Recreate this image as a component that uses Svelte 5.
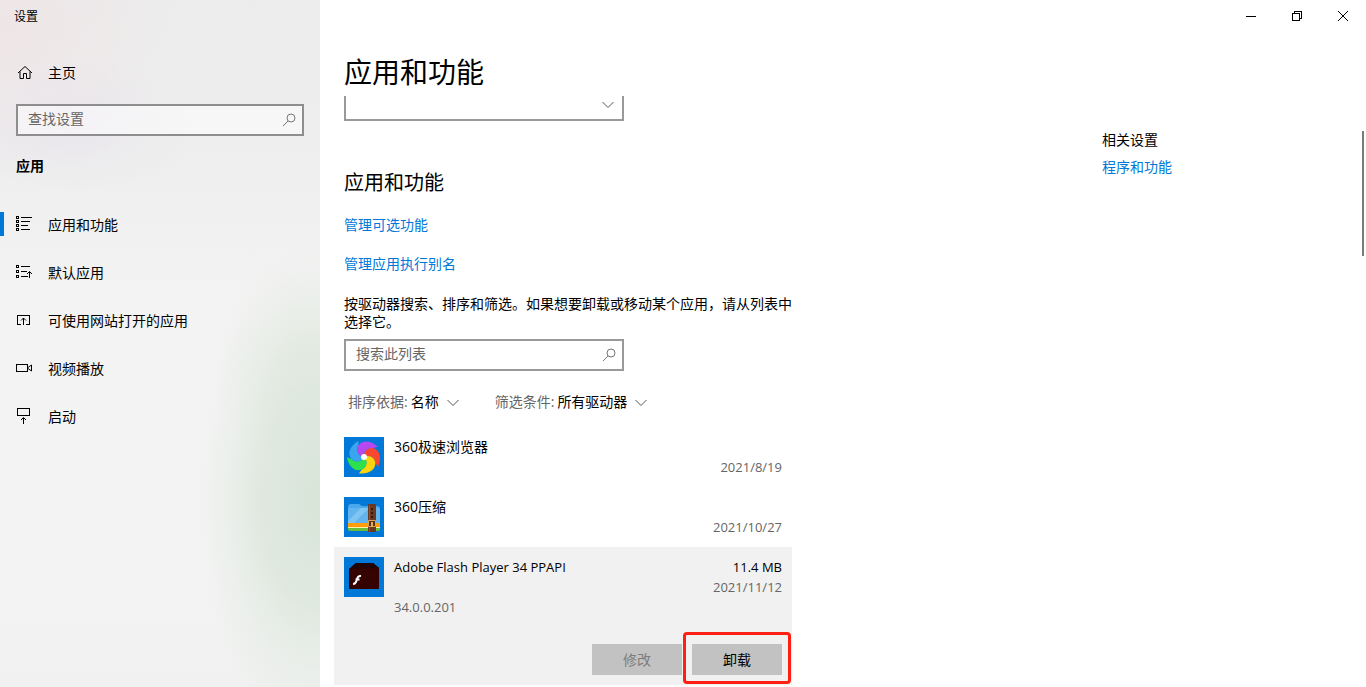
<script>
  let active = "apps";
  let settingQuery = "";
  let appQuery = "";

  const navItems = [
    { id: "apps", label: "应用和功能" },
    { id: "defaults", label: "默认应用" },
    { id: "websites", label: "可使用网站打开的应用" },
    { id: "video", label: "视频播放" },
    { id: "startup", label: "启动" },
  ];

  const apps = [
    { icon: "browser", name: "360极速浏览器", date: "2021/8/19" },
    { icon: "zip", name: "360压缩", date: "2021/10/27" },
    {
      icon: "flash",
      name: "Adobe Flash Player 34 PPAPI",
      latin: true,
      size: "11.4 MB",
      date: "2021/11/12",
      version: "34.0.0.201",
      selected: true,
    },
  ];

  const petals = [
    { color: "#fb4630", turn: 0 },
    { color: "#fbd40d", turn: 72 },
    { color: "#2ee04e", turn: 144 },
    { color: "#3aa5ef", turn: 216 },
    { color: "#b548ee", turn: 288 },
  ];
</script>

{#snippet magnifier()}
  <svg class="magnifier" viewBox="0 0 14 14" aria-hidden="true">
    <circle cx="9" cy="5" r="4" />
    <path d="M6 8L1 13" />
  </svg>
{/snippet}

{#snippet chevron()}
  <svg class="chevron" viewBox="0 0 12 8" aria-hidden="true">
    <path d="M0.5 1L6 6.5L11.5 1" />
  </svg>
{/snippet}

<div class="window">
  <div class="sidebar">
    <div class="caption">设置</div>
    <a class="nav-item home" href="#home">
      <svg class="smooth" viewBox="0 0 16 16" aria-hidden="true">
        <path d="M2 9L9 2.5L16 9M4 7.5V14.5H7.5V9.5H10.5V14.5H14V7.5" />
      </svg>
      <span>主页</span>
    </a>
    <div class="search side-search">
      <input
        type="text"
        placeholder="查找设置"
        aria-label="查找设置"
        bind:value={settingQuery}
      />
      {@render magnifier()}
    </div>
    <h3>应用</h3>
    <nav>
      {#each navItems as item}
        <a
          class="nav-item"
          class:active={active === item.id}
          href="#{item.id}"
          on:click={() => (active = item.id)}
        >
          <svg viewBox="0 0 16 16" aria-hidden="true">
            {#if item.id === "apps"}
              <path
                d="M.5 .5h2v2h-2zM.5 4.5h2v2h-2zM.5 8.5h2v2h-2zM.5 12.5h2v2h-2zM5 1.5h11M5 5.5h9M5 9.5h7M5 13.5h9"
              />
            {:else if item.id === "defaults"}
              <path
                d="M.5 1.5h2v2h-2zM.5 6.5h2v2h-2zM.5 11.5h2v2h-2zM5 2.5h9M5 7.5h6M5 12.5h7M13.5 8v6"
              />
              <path class="smooth" d="M11 10L13.5 7.5L16 10" />
            {:else if item.id === "websites"}
              <path d="M5 12.5H1.5V3.5H13.5V12.5H10M7.5 6v7" />
              <path class="smooth" d="M5 8.5L7.5 6L10 8.5" />
            {:else if item.id === "video"}
              <path d="M.5 4.5h11v7h-11z" />
              <path class="smooth" d="M12 7.5L15.5 5v6L12 8.5" />
            {:else}
              <path d="M1.5 .5h12v7h-12zM7.5 10v6" />
              <path class="smooth" d="M5 12L7.5 9.5L10 12" />
            {/if}
          </svg>
          <span>{item.label}</span>
        </a>
      {/each}
    </nav>
  </div>

  <main>
    <div class="window-buttons">
      <button aria-label="最小化">
        <svg viewBox="0 0 10 10"><path d="M0 5.5h10" /></svg>
      </button>
      <button aria-label="还原">
        <svg viewBox="0 0 10 10">
          <path d="M.5 2.5h7v7h-7zM2.5 2.5v-2h7v7h-2" />
        </svg>
      </button>
      <button aria-label="关闭">
        <svg class="smooth" viewBox="0 0 10 10"><path d="M0 0L10 10M10 0L0 10" /></svg>
      </button>
    </div>

    <h1>应用和功能</h1>

    <div class="viewport">
      <div class="content">
        <div class="source">
          <select aria-label="选择获取应用的位置"><option></option></select>
          {@render chevron()}
        </div>

        <h2>应用和功能</h2>
        <a class="link" href="#optional">管理可选功能</a>
        <a class="link" href="#aliases">管理应用执行别名</a>

        <p>按驱动器搜索、排序和筛选。如果想要卸载或移动某个应用，请从列表中选择它。</p>

        <div class="search app-search">
          <input
            type="text"
            placeholder="搜索此列表"
            aria-label="搜索此列表"
            bind:value={appQuery}
          />
          {@render magnifier()}
        </div>

        <div class="filters">
          <div class="filter">
            <label for="sort">排序依据:</label>
            <select id="sort"><option>名称</option></select>
            {@render chevron()}
          </div>
          <div class="filter">
            <label for="drive">筛选条件:</label>
            <select id="drive"><option>所有驱动器</option></select>
            {@render chevron()}
          </div>
        </div>

        <ul class="apps">
          {#each apps as app}
            <li class:selected={app.selected}>
              <svg class="app-icon" viewBox="0 0 40 40" aria-hidden="true">
                {#if app.icon === "browser"}
                  {#each petals as petal}
                    <path
                      d="M20 20C19 14 24 10 29 11C36 13 38 21 34 30L31.3 25.8C30.7 20.7 25.4 17.2 20 20Z"
                      fill={petal.color}
                      transform="rotate({petal.turn} 20 20)"
                    />
                  {/each}
                  <circle cx="20" cy="20" r="3" fill="#fff" />
                {:else if app.icon === "zip"}
                  <path d="M4 10Q4 7 7 7H15L18 9H33Q36 9 36 12V27H4Z" fill="#48a8ec" />
                  <path d="M4 13Q4 11 6 11H34Q36 11 36 13V26H4Z" fill="#62b4ee" />
                  <path d="M4 24L17 11H25L10 26H4Z" fill="#80c4f2" />
                  <path d="M4 26H36V30H4Z" fill="#ff9d0a" />
                  <path d="M4 30H36V31H4Z" fill="#fff1a8" />
                  <path d="M4 31H36V32Q36 34 34 34H6Q4 34 4 32Z" fill="#69bd38" />
                  <path d="M24 8Q24 7 25 7H31Q32 7 32 8V35H24Z" fill="#6b3822" />
                  <path d="M25 8H26V35H25Z" fill="#8c5538" />
                  <path d="M27 11h2v2h-2zM27 15h2v2h-2zM27 19h2v2h-2z" fill="#32180f" />
                  <path
                    d="M24.5 23.5H31.5V29.5H24.5Z"
                    fill="#54301f"
                    stroke="#dca654"
                    stroke-width="1"
                  />
                  <path d="M27 25h2v5h-2z" fill="#e8b04b" />
                {:else}
                  <path d="M5 12L12 6H29L35 11V31Q35 32 34 32H6Q5 32 5 31Z" fill="#350302" />
                  <path d="M5 12L12 6H29L35 11Z" fill="#210403" />
                  <path
                    d="M17 19Q14 18.5 13 22L12 25Q11 27 9 27M11.5 22.5H15.5"
                    fill="none"
                    stroke="#fff"
                    stroke-width="2"
                  />
                {/if}
              </svg>
              <div class="info">
                <div class="line">
                  <span class:latin={app.latin}>{app.name}</span>
                  {#if app.size}<span class="latin">{app.size}</span>{/if}
                </div>
                <div class="line date latin">{app.date}</div>
                {#if app.version}
                  <div class="line muted latin">{app.version}</div>
                {/if}
              </div>
              {#if app.selected}
                <div class="actions">
                  <button disabled>修改</button>
                  <div class="marked"><button>卸载</button></div>
                </div>
              {/if}
            </li>
          {/each}
        </ul>
      </div>

      <aside>
        <div>相关设置</div>
        <a href="#programs">程序和功能</a>
      </aside>
    </div>
    <div class="scroll-thumb"></div>
  </main>
</div>

<style>
  :global(body) {
    margin: 0;
    background: #fff;
  }

  .window {
    display: grid;
    grid-template-columns: 320px minmax(0, 1fr);
    min-height: 100vh;
    font-family: "Open Sans", "Noto Sans CJK SC", sans-serif;
    font-size: 14px;
    line-height: 20px;
    color: #000;
  }

  .window :is(input, select, button) {
    font: inherit;
    color: inherit;
    box-sizing: border-box;
    margin: 0;
    border-radius: 0;
  }

  a {
    color: #0078d7;
    text-decoration: none;
  }

  h1,
  h2,
  h3,
  p,
  ul {
    margin: 0;
    padding: 0;
    font-weight: 400;
  }

  svg {
    display: block;
    flex: none;
    fill: none;
    stroke: currentcolor;
    shape-rendering: crispEdges;
  }

  .smooth {
    shape-rendering: auto;
  }

  .sidebar {
    background:
      radial-gradient(ellipse 120px 230px at 315px 500px, #d9e5d9, #d9e5d9c0 45%, #d9e5d940 75%, #d9e5d900),
      radial-gradient(ellipse 100px 110px at 310px 360px, #e0e8dc90, #e0e8dc00),
      radial-gradient(ellipse 120px 70px at 75px 125px, #e8e3ecb0, #e8e3ec00),
      radial-gradient(ellipse 170px 150px at 5px 30px, #efe2e4b0, #efe2e400),
      linear-gradient(#ececec, #eeefee 25%, #f3f3f3 45%, #f3f3f3 85%, #f0f1f0);
  }

  .caption {
    height: 32px;
    padding-left: 14px;
    font-size: 12px;
    line-height: 34px;
  }

  .nav-item {
    position: relative;
    display: flex;
    align-items: center;
    gap: 16px;
    height: 48px;
    padding-left: 16px;
    color: #000;
  }

  .nav-item span {
    padding-top: 2px;
  }

  .nav-item svg {
    width: 16px;
    height: 16px;
  }

  .home {
    margin-top: 16px;
  }

  .active::before {
    content: "";
    position: absolute;
    left: 0;
    top: 12px;
    width: 4px;
    height: 24px;
    background: #0078d7;
  }

  .search {
    position: relative;
    height: 32px;
  }

  .search input {
    width: 100%;
    height: 32px;
    padding: 0 32px 4px 10px;
    border: 2px solid #999;
    background: #fff;
    outline: none;
  }

  .search input::placeholder {
    color: #666;
    opacity: 1;
  }

  .magnifier {
    position: absolute;
    top: 9px;
    right: 8px;
    width: 14px;
    height: 14px;
    color: #777;
    shape-rendering: auto;
  }

  .side-search {
    margin: 8px 16px 20px;
  }

  .side-search input {
    border-color: #8e8e8e;
    background: rgba(255, 255, 255, 0.5);
  }

  h3 {
    margin: 0 16px 24px;
    font-size: 14px;
    font-weight: 700;
    line-height: 20px;
  }

  main {
    position: relative;
    min-width: 0;
  }

  .window-buttons {
    display: flex;
    justify-content: flex-end;
  }

  .window-buttons button {
    display: flex;
    align-items: center;
    justify-content: center;
    width: 46px;
    height: 32px;
    padding: 0;
    border: 0;
    background: none;
  }

  .window-buttons svg {
    width: 10px;
    height: 10px;
  }

  h1 {
    padding: 20px 24px 4px;
    font-size: 28px;
    line-height: 40px;
  }

  /* the list is scrolled a little, so its first control is cut at the top */
  .viewport {
    display: grid;
    grid-template-columns: minmax(0, 1fr) 264px;
    overflow: hidden;
  }

  .content {
    max-width: 448px;
    margin: -7px 24px 0;
  }

  .source,
  .app-search {
    width: 280px;
  }

  .source {
    position: relative;
  }

  select {
    appearance: none;
    background: none;
    outline: none;
  }

  .source select {
    display: block;
    width: 100%;
    height: 32px;
    border: 2px solid #999;
  }

  .chevron {
    position: absolute;
    right: 0;
    top: 7px;
    width: 12px;
    height: 8px;
    color: #555;
    pointer-events: none;
    shape-rendering: auto;
  }

  .source .chevron {
    right: 10px;
    top: 12px;
  }

  h2 {
    margin: 48px 0 18px;
    font-size: 20px;
    line-height: 28px;
  }

  .link {
    display: block;
    width: fit-content;
    margin-bottom: 19px;
  }

  p {
    margin: 21px 0 8px;
    line-height: 18px;
  }

  .filters {
    display: flex;
    gap: 36px;
    margin: 21px 4px 15px;
  }

  .filter {
    position: relative;
    display: flex;
    gap: 3px;
  }

  .filter label {
    color: #666;
  }

  .filter select {
    height: 20px;
    padding: 0 20px 0 0;
    border: 0;
  }

  .apps {
    margin-left: -10px;
    list-style: none;
  }

  li {
    display: grid;
    grid-template-columns: 40px minmax(0, 1fr);
    column-gap: 10px;
    padding: 10px;
  }

  .selected {
    background: #f1f1f1;
  }

  .app-icon {
    width: 40px;
    height: 40px;
    background: #0078d7;
    stroke: none;
    shape-rendering: auto;
  }

  .line {
    display: flex;
    justify-content: space-between;
    height: 20px;
  }

  .latin {
    font-size: 13px;
  }

  .date {
    justify-content: flex-end;
    color: #666;
  }

  .muted {
    color: #666;
  }

  .actions {
    grid-column: 1 / -1;
    display: flex;
    justify-content: flex-end;
    gap: 10px;
    margin-top: 27px;
  }

  .actions button {
    display: block;
    width: 90px;
    height: 31px;
    padding: 0;
    border: 0;
    background: #c2c2c2;
  }

  .actions button:disabled {
    color: #7d7d7d;
  }

  .marked {
    position: relative;
  }

  .marked::after {
    content: "";
    position: absolute;
    inset: -12px -9px -9px;
    border: 3px solid #ff2013;
    border-radius: 4px;
    pointer-events: none;
  }

  aside {
    display: flex;
    flex-direction: column;
    align-items: flex-start;
    gap: 7px;
    padding-top: 34px;
  }

  .scroll-thumb {
    position: absolute;
    top: 131px;
    right: 2px;
    width: 2px;
    height: 125px;
    background: #7a7a7a;
  }
</style>
